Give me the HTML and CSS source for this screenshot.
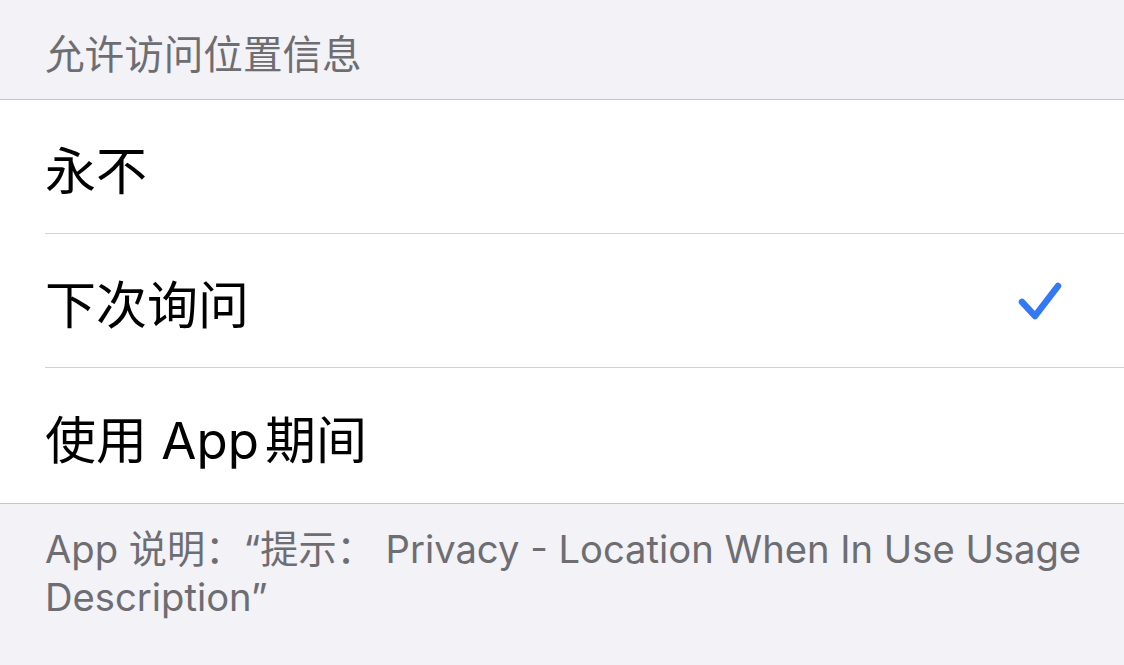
FILE: index.html
```html
<!DOCTYPE html>
<html lang="zh-CN">
<head>
<meta charset="utf-8">
<link rel="stylesheet" href="styles.css">
</head>
<body>
<div class="page">
  <div class="section-header">允许访问位置信息</div>
  <div class="group">
    <div class="row"><span class="label">永不</span></div>
    <div class="row"><span class="label">下次询问</span>
      <svg class="check" width="50" height="46" viewBox="0 0 50 46">
        <path d="M6 24 L19 38 L42 8" fill="none" stroke="#3478F6" stroke-width="6.5" stroke-linecap="round" stroke-linejoin="round"/>
      </svg>
    </div>
    <div class="row"><span class="label">使用 <span class="app">App</span>期间</span></div>
  </div>
  <div class="section-footer">App 说明：“提示： Privacy - Location When In Use Usage Description”</div>
</div>
</body>
</html>
```
FILE: styles.css
```css
html, body {
  margin: 0;
  padding: 0;
  background: #f2f2f7;
}
.page {
  width: 1124px;
  height: 665px;
  overflow: hidden;
  background: #f2f2f7;
  font-family: "Inter", "Noto Sans CJK SC", sans-serif;
}
.section-header {
  height: 100px;
  box-sizing: border-box;
  padding: 30px 0 0 45px;
  font-size: 39.6px;
  line-height: 50px;
  color: #6d6d72;
  border-bottom: 1px solid #c8c7cc;
}
.group {
  background: #fff;
  border-bottom: 1px solid #c8c7cc;
  padding-left: 45px;
}
.row {
  height: 134px;
  box-sizing: border-box;
  display: flex;
  align-items: center;
  justify-content: space-between;
  padding-right: 58px;
  border-bottom: 1px solid #d1d1d6;
}
.row:last-child {
  height: 135px;
  border-bottom: none;
}
.label {
  font-size: 51px;
  color: #000;
  padding-top: 2px;
}
.app {
  margin-right: 6px;
}
.check {
  display: block;
}
.section-footer {
  padding: 21px 30px 0 45px;
  font-size: 38.2px;
  line-height: 48px;
  color: #6d6d72;
}
```
